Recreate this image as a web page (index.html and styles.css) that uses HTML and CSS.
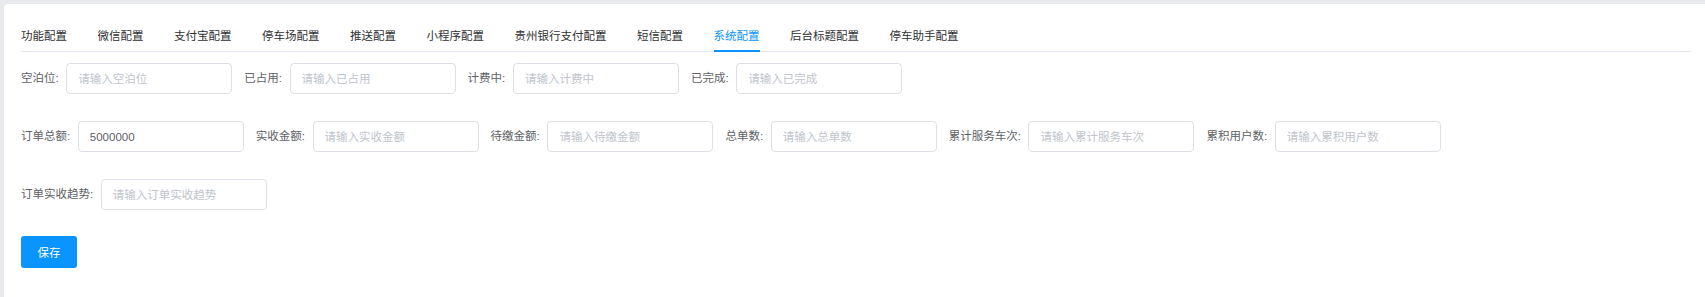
FILE: index.html
```html
<!DOCTYPE html>
<html lang="zh-CN">
<head>
    <meta charset="UTF-8">
    <meta name="viewport" content="width=device-width, initial-scale=1.0">
    <title>系统配置</title>
    <link rel="stylesheet" href="styles.css">
</head>
<body>
    <div class="page">
        <div class="card">
            <div class="tabs">
                <div class="tab">功能配置</div>
                <div class="tab">微信配置</div>
                <div class="tab">支付宝配置</div>
                <div class="tab">停车场配置</div>
                <div class="tab">推送配置</div>
                <div class="tab">小程序配置</div>
                <div class="tab">贵州银行支付配置</div>
                <div class="tab">短信配置</div>
                <div class="tab active">系统配置</div>
                <div class="tab">后台标题配置</div>
                <div class="tab">停车助手配置</div>
            </div>

            <form class="config-form">
                <div class="form-row">
                    <div class="form-item">
                        <label>空泊位:</label>
                        <input type="text" placeholder="请输入空泊位">
                    </div>
                    <div class="form-item">
                        <label>已占用:</label>
                        <input type="text" placeholder="请输入已占用">
                    </div>
                    <div class="form-item">
                        <label>计费中:</label>
                        <input type="text" placeholder="请输入计费中">
                    </div>
                    <div class="form-item">
                        <label>已完成:</label>
                        <input type="text" placeholder="请输入已完成">
                    </div>
                </div>

                <div class="form-row">
                    <div class="form-item">
                        <label>订单总额:</label>
                        <input type="text" placeholder="请输入订单总额" value="5000000">
                    </div>
                    <div class="form-item">
                        <label>实收金额:</label>
                        <input type="text" placeholder="请输入实收金额">
                    </div>
                    <div class="form-item">
                        <label>待缴金额:</label>
                        <input type="text" placeholder="请输入待缴金额">
                    </div>
                    <div class="form-item">
                        <label>总单数:</label>
                        <input type="text" placeholder="请输入总单数">
                    </div>
                    <div class="form-item">
                        <label>累计服务车次:</label>
                        <input type="text" placeholder="请输入累计服务车次">
                    </div>
                    <div class="form-item">
                        <label>累积用户数:</label>
                        <input type="text" placeholder="请输入累积用户数">
                    </div>
                </div>

                <div class="form-row">
                    <div class="form-item">
                        <label>订单实收趋势:</label>
                        <input type="text" placeholder="请输入订单实收趋势">
                    </div>
                </div>

                <button type="button" class="btn-primary">保存</button>
            </form>
        </div>
    </div>
</body>
</html>
```

FILE: styles.css
```css
* {
    margin: 0;
    padding: 0;
    box-sizing: border-box;
}

body {
    font-family: "Liberation Sans", "Noto Sans CJK SC", sans-serif;
    font-size: 11.5px;
    color: #606266;
    background: #e9eaee;
}

.page {
    min-height: 100vh;
    padding: 4px 0 0 4px;
    display: flex;
}

.card {
    flex: 1;
    background: #fff;
    border-radius: 4px 0 0 0;
    padding: 17px 14px 0 17px;
}

.tabs {
    display: flex;
    border-bottom: 1px solid #e4e7ed;
}

.tab {
    position: relative;
    height: 30px;
    line-height: 30px;
    padding: 0 15.25px;
    color: #303133;
    white-space: nowrap;
}

.tab:first-child {
    padding-left: 0;
}

.tab:last-child {
    padding-right: 0;
}

.tab.active {
    color: #0a94ff;
}

.tab.active::after {
    content: '';
    position: absolute;
    left: 15.25px;
    right: 15.25px;
    bottom: -1px;
    height: 2px;
    background: #0a94ff;
}

.config-form {
    padding-top: 11px;
}

.form-row {
    display: flex;
    gap: 12px;
    margin-bottom: 27px;
}

.form-item {
    display: flex;
    align-items: center;
}

.form-item label {
    padding-right: 7.6px;
    line-height: 31px;
    color: #606266;
    white-space: nowrap;
}

.form-item input {
    width: 166px;
    height: 31px;
    padding: 0 11px;
    border: 1px solid #dcdfe6;
    border-radius: 4px;
    font-family: inherit;
    font-size: 11.5px;
    color: #606266;
    outline: none;
}

.form-item input::placeholder {
    color: #c0c4cc;
}

.btn-primary {
    width: 56px;
    height: 32px;
    margin-top: -1px;
    border: none;
    border-radius: 3px;
    background: #0a94ff;
    color: #fff;
    font-family: inherit;
    font-size: 11.5px;
    cursor: pointer;
}
```
